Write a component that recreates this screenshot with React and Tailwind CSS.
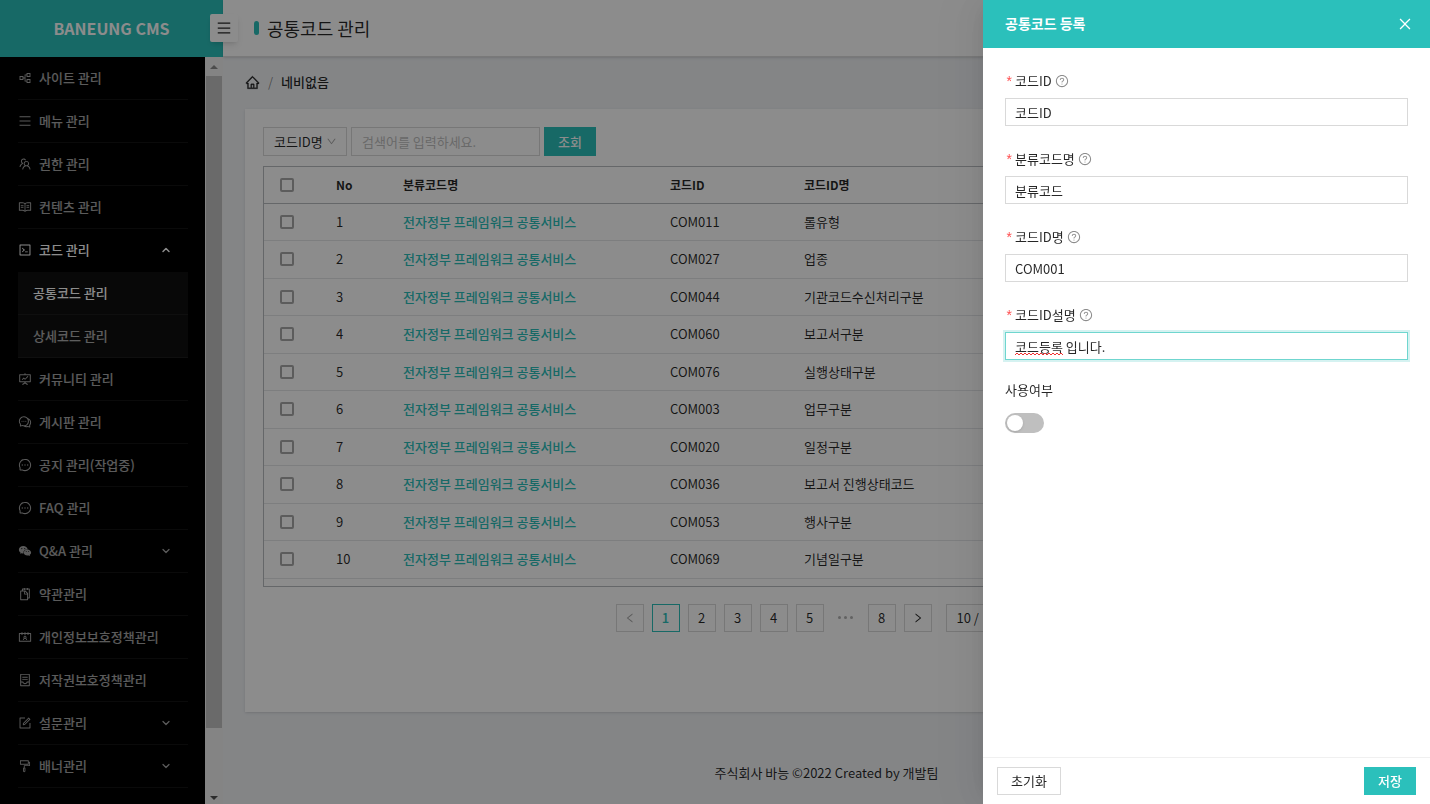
import React, { useState } from "react";
import {
  AiOutlinePartition,
  AiOutlineMenu,
  AiOutlineTeam,
  AiOutlineRead,
  AiOutlineCode,
  AiOutlineFundProjectionScreen,
  AiOutlineComment,
  AiOutlineMessage,
  AiFillWechat,
  AiOutlineSnippets,
  AiOutlineContacts,
  AiOutlineContainer,
  AiOutlineForm,
  AiOutlineFormatPainter,
  AiOutlineHome,
  AiOutlineQuestionCircle,
  AiOutlineClose,
  AiOutlineDown,
  AiOutlineLeft,
  AiOutlineRight,
} from "react-icons/ai";
import { FiChevronDown, FiChevronUp } from "react-icons/fi";

const MENU = [
  { icon: AiOutlinePartition, label: "사이트 관리" },
  { icon: AiOutlineMenu, label: "메뉴 관리" },
  { icon: AiOutlineTeam, label: "권한 관리" },
  { icon: AiOutlineRead, label: "컨텐츠 관리" },
  {
    icon: AiOutlineCode,
    label: "코드 관리",
    children: [
      { label: "공통코드 관리", active: true },
      { label: "상세코드 관리" },
    ],
  },
  { icon: AiOutlineFundProjectionScreen, label: "커뮤니티 관리" },
  { icon: AiOutlineComment, label: "게시판 관리" },
  { icon: AiOutlineMessage, label: "공지 관리(작업중)" },
  { icon: AiOutlineMessage, label: "FAQ 관리" },
  { icon: AiFillWechat, label: "Q&A 관리", expandable: true },
  { icon: AiOutlineSnippets, label: "약관관리" },
  { icon: AiOutlineContacts, label: "개인정보보호정책관리" },
  { icon: AiOutlineContainer, label: "저작권보호정책관리" },
  { icon: AiOutlineForm, label: "설문관리", expandable: true },
  { icon: AiOutlineFormatPainter, label: "배너관리", expandable: true },
];

const ROWS = [
  ["COM011", "롤유형"],
  ["COM027", "업종"],
  ["COM044", "기관코드수신처리구분"],
  ["COM060", "보고서구분"],
  ["COM076", "실행상태구분"],
  ["COM003", "업무구분"],
  ["COM020", "일정구분"],
  ["COM036", "보고서 진행상태코드"],
  ["COM053", "행사구분"],
  ["COM069", "기념일구분"],
];

function MenuItem({ item }) {
  const Icon = item.icon;
  const open = Boolean(item.children);
  return (
    <li>
      <a
        href="#"
        className={`flex h-[43px] items-center border-b font-medium ${
          open ? "border-transparent text-white" : "border-[#131313] text-white/65"
        }`}
      >
        <Icon className="mr-[7px] size-[14px]" />
        <span className="flex-1">{item.label}</span>
        {item.expandable && <FiChevronDown className="mr-4 size-3" strokeWidth={2.5} />}
        {open && <FiChevronUp className="mr-4 size-3" strokeWidth={3} />}
      </a>
      {open && (
        <ul className="bg-[#101010]">
          {item.children.map((child) => (
            <li key={child.label}>
              <a
                href="#"
                className={`flex h-[43px] items-center border-b border-[#1c1c1c] pl-[15px] font-medium ${
                  child.active ? "text-white" : "text-white/65"
                }`}
              >
                {child.label}
              </a>
            </li>
          ))}
        </ul>
      )}
    </li>
  );
}

function Sidebar() {
  return (
    <aside className="flex h-screen w-[223px] shrink-0 flex-col">
      <div className="flex h-[57px] shrink-0 items-center justify-center bg-[#2bc0bb] pb-0.5 text-base font-bold text-white">
        BANEUNG CMS
      </div>
      <div className="flex min-h-0 flex-1">
        <nav className="min-w-0 flex-1 overflow-hidden bg-black pr-[17px] pl-[18px]">
          <ul>
            {MENU.map((item) => (
              <MenuItem key={item.label} item={item} />
            ))}
          </ul>
        </nav>
        <div
          className="flex w-[18px] flex-col items-center bg-[#f1f1f1] pt-2 pb-1"
          aria-hidden="true"
        >
          <svg viewBox="0 0 8 4" className="h-1 w-2 shrink-0 fill-[#8a8a8a]">
            <path d="M0 4L4 0L8 4Z" />
          </svg>
          <div className="mt-[7px] mb-[68px] w-4 flex-1 bg-[#c1c1c1]" />
          <svg viewBox="0 0 8 4" className="h-1 w-2 shrink-0 fill-[#505050]">
            <path d="M0 0L4 4L8 0Z" />
          </svg>
        </div>
      </div>
    </aside>
  );
}

function Check({ label }) {
  return (
    <input
      type="checkbox"
      aria-label={label}
      className="block size-[14px] appearance-none rounded-[2px] border-2 border-[#a8a8a8] bg-white"
    />
  );
}

function CodeTable() {
  return (
    <div className="mt-[10px] border border-[#b9bcc0] pb-[7px]">
      <table className="w-full table-fixed border-collapse text-left">
        <colgroup>
          <col className="w-[56px]" />
          <col className="w-[67px]" />
          <col className="w-[267px]" />
          <col className="w-[134px]" />
          <col />
        </colgroup>
        <thead>
          <tr className="h-[36px] border-b border-[#b9bcc0] text-xs font-bold">
            <th className="pl-4">
              <Check label="전체 선택" />
            </th>
            <th className="pl-4">No</th>
            <th className="pl-4">분류코드명</th>
            <th className="pl-4">코드ID</th>
            <th className="pl-4">코드ID명</th>
          </tr>
        </thead>
        <tbody>
          {ROWS.map(([id, name], i) => (
            <tr key={id} className="h-[38px] border-b border-[#e3e5e8] odd:h-[37px]">
              <td className="pl-4">
                <Check label={id} />
              </td>
              <td className="pl-4">{i + 1}</td>
              <td className="pl-4">
                <a href="#" className="font-medium text-[#2bc0bb]">
                  전자정부 프레임워크 공통서비스
                </a>
              </td>
              <td className="pl-4">{id}</td>
              <td className="pl-4">{name}</td>
            </tr>
          ))}
        </tbody>
      </table>
    </div>
  );
}

const PAGE_BTN = "flex size-7 items-center justify-center border";

function Pagination() {
  return (
    <nav className="mt-[17px] flex justify-center gap-2" aria-label="페이지">
      <button className={`${PAGE_BTN} border-[#d9d9d9] text-black/35`} aria-label="이전">
        <AiOutlineLeft className="size-3" />
      </button>
      <button className={`${PAGE_BTN} border-[#2bc0bb] font-medium text-[#2bc0bb]`}>1</button>
      {[2, 3, 4, 5].map((n) => (
        <button key={n} className={`${PAGE_BTN} border-[#d9d9d9]`}>
          {n}
        </button>
      ))}
      <svg viewBox="0 0 28 28" className="size-7 fill-black/30" aria-hidden="true">
        <circle cx="7.500" cy="13.500" r="1.500" />
        <circle cx="13.500" cy="13.500" r="1.500" />
        <circle cx="19.500" cy="13.500" r="1.500" />
      </svg>
      <button className={`${PAGE_BTN} border-[#d9d9d9]`}>8</button>
      <button className={`${PAGE_BTN} border-[#d9d9d9]`} aria-label="다음">
        <AiOutlineRight className="size-3" />
      </button>
      <select
        aria-label="페이지 크기"
        className="ml-[6px] h-7 w-[92px] appearance-none border border-[#d9d9d9] bg-white px-[10px]"
      >
        <option>10 /</option>
      </select>
    </nav>
  );
}

function Main() {
  return (
    <div className="flex min-w-0 flex-1 flex-col bg-[#f0f2f5]">
      <header className="relative flex h-[57px] items-center border-b border-[#dcdcdc] bg-white pl-[31px] shadow-sm">
        <button
          className="absolute top-[14px] -left-[13px] flex size-7 items-center justify-center rounded-[2px] bg-white shadow-md"
          aria-label="메뉴 접기"
        >
          <AiOutlineMenu className="size-4" />
        </button>
        <span className="mr-2 h-[14px] w-[5px] rounded-full bg-[#2bc0bb]" />
        <h1 className="text-lg">공통코드 관리</h1>
      </header>
      <main className="flex flex-1 flex-col px-[22px]">
        <nav className="flex h-[52px] items-center gap-2 pb-0.5" aria-label="현재 위치">
          <a href="#" aria-label="홈">
            <AiOutlineHome className="size-[15px] stroke-[20]" />
          </a>
          <span className="text-black/45">/</span>
          <span className="font-medium">네비없음</span>
        </nav>
        <section className="flex-1 bg-white p-[18px] shadow-sm">
          <form className="flex gap-1" onSubmit={(e) => e.preventDefault()}>
            <div className="relative">
              <select
                aria-label="검색 조건"
                className="h-[29px] w-[84px] appearance-none border border-[#d9d9d9] bg-white pl-[10px]"
              >
                <option>코드ID명</option>
              </select>
              <AiOutlineDown className="pointer-events-none absolute top-[9px] right-[10px] size-[11px] text-black/35" />
            </div>
            <input
              type="text"
              aria-label="검색어"
              placeholder="검색어를 입력하세요."
              className="h-[29px] w-[189px] border border-[#d9d9d9] px-[10px] placeholder:text-[#bfbfbf]"
            />
            <button className="h-[29px] w-[52px] bg-[#2bc0bb] font-medium text-white">조회</button>
          </form>
          <CodeTable />
          <Pagination />
        </section>
        <footer className="flex h-[92px] items-center justify-center pt-[30px]">
          주식회사 바능 ©2022 Created by 개발팀
        </footer>
      </main>
    </div>
  );
}

function Field({ id, label, value, focused }) {
  const [text, setText] = useState(value);
  return (
    <div className="mb-[22px]">
      <label htmlFor={id} className="mb-[6px] flex h-[22px] items-center gap-[3px]">
        <span
          className="w-[7px] pt-1 font-['Liberation_Mono',monospace] text-sm text-[#ff4d4f]"
          aria-hidden="true"
        >
          *
        </span>
        {label}
        <AiOutlineQuestionCircle className="size-[14px] text-black/45" />
      </label>
      <div className="relative">
        <input
          id={id}
          type="text"
          value={text}
          onChange={(e) => setText(e.target.value)}
          className={`block h-7 w-full border px-[9px] outline-none ${
            focused
              ? "border-[#6fd6cf] shadow-[0_0_0_2px_rgba(43,192,187,0.2)]"
              : "border-[#d9d9d9]"
          }`}
        />
        {focused && (
          <svg
            viewBox="0 0 48 4"
            className="pointer-events-none absolute top-5 left-[10px] h-1 w-12 fill-none stroke-[#f03030]"
            aria-hidden="true"
          >
            <path d="M0 3L2 1L4 3L6 1L8 3L10 1L12 3L14 1L16 3L18 1L20 3L22 1L24 3L26 1L28 3L30 1L32 3L34 1L36 3L38 1L40 3L42 1L44 3L46 1L48 3" />
          </svg>
        )}
      </div>
    </div>
  );
}

function Drawer() {
  return (
    <div
      role="dialog"
      aria-labelledby="drawer-title"
      className="fixed inset-y-0 right-0 flex w-[447px] flex-col bg-white shadow-[-6px_0_16px_-8px_rgba(0,0,0,0.08),-9px_0_28px_0_rgba(0,0,0,0.05),-12px_0_48px_16px_rgba(0,0,0,0.03)]"
    >
      <header className="flex h-12 items-center justify-between bg-[#2bc0bb] pr-[17px] pl-[22px] text-white">
        <h2 id="drawer-title" className="pb-0.5 text-sm font-bold">
          공통코드 등록
        </h2>
        <button aria-label="닫기">
          <AiOutlineClose className="size-4" />
        </button>
      </header>
      <form className="flex-1 p-[22px]" onSubmit={(e) => e.preventDefault()}>
        <Field id="code-id" label="코드ID" value="코드ID" />
        <Field id="class-name" label="분류코드명" value="분류코드" />
        <Field id="code-name" label="코드ID명" value="COM001" />
        <Field id="code-desc" label="코드ID설명" value="코드등록 입니다." focused />
        <label htmlFor="use-yn" className="flex h-4 items-center">
          사용여부
        </label>
        <input
          id="use-yn"
          type="checkbox"
          role="switch"
          className="mt-[15px] flex h-5 w-[39px] appearance-none items-center rounded-full bg-[#bfbfbf] p-[2px] before:block before:size-4 before:rounded-full before:bg-white before:shadow-sm checked:justify-end checked:bg-[#2bc0bb]"
        />
      </form>
      <footer className="flex justify-between border-t border-[#f0f0f0] px-[14px] py-[9px]">
        <button className="h-7 w-16 border border-[#d9d9d9]">초기화</button>
        <button className="h-7 w-[52px] bg-[#2bc0bb] font-medium text-white">저장</button>
      </footer>
    </div>
  );
}

export default function App() {
  return (
    <div className="flex min-h-screen font-['Noto_Sans_CJK_KR',sans-serif] text-[13px] leading-5 text-black/85">
      <Sidebar />
      <Main />
      <div className="fixed inset-0 bg-black/45" />
      <Drawer />
    </div>
  );
}
